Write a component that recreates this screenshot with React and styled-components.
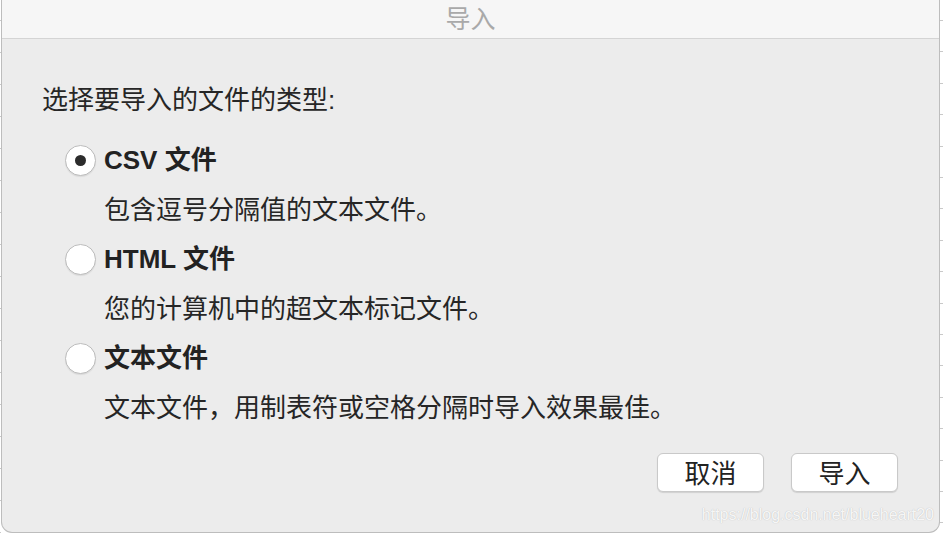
import React, { useState } from 'react'
import styled, { createGlobalStyle } from 'styled-components'

const GlobalStyle = createGlobalStyle`
  body {
    margin: 0;
    background: #fff;
    font-family: "Liberation Sans", "Noto Sans CJK SC", sans-serif;
  }
`

const Backdrop = styled.div`
  width: 943px;
  height: 534px;
  box-sizing: border-box;
  padding-left: 1px;
  background:
    repeating-linear-gradient(to bottom, transparent 0 20px, #c9c9c9 20px 21px, transparent 21px 31.4px) right top / 3px 100% no-repeat,
    repeating-linear-gradient(to bottom, transparent 0 20px, #c9c9c9 20px 21px, transparent 21px 32px) left top / 1px 100% no-repeat,
    #fff;
`

const Dialog = styled.div`
  position: relative;
  width: 939px;
  height: 533px;
  box-sizing: border-box;
  background: #ececec;
  border: 1px solid #bdbdbd;
  border-top: none;
  border-radius: 0 0 11px 11px;
  display: flex;
  flex-direction: column;
  color: #262626;
`

const TitleBar = styled.div`
  height: 38px;
  flex-shrink: 0;
  background: #f6f6f6;
  border-bottom: 1px solid #d4d4d4;
  display: flex;
  align-items: center;
  justify-content: center;
  font-size: 25px;
  color: #a9a9a9;
  line-height: 38px;
`

const Body = styled.div`
  padding: 46px 40px 0 40px;
  display: flex;
  flex-direction: column;
`

const Heading = styled.div`
  font-size: 26px;
  line-height: 30px;
`

const Options = styled.div`
  margin-top: 30px;
  display: flex;
  flex-direction: column;
  gap: 19px;
`

const Option = styled.div`
  display: flex;
  flex-direction: column;
  gap: 20px;
`

const OptionRow = styled.label`
  display: flex;
  align-items: center;
  gap: 8px;
  height: 30px;
  padding-left: 23px;
  cursor: default;
`

const Radio = styled.span`
  width: 31px;
  height: 31px;
  flex-shrink: 0;
  box-sizing: border-box;
  border-radius: 50%;
  background: #fff;
  border: 1px solid #bcbcbc;
  box-shadow: 0 1px 1px rgba(0, 0, 0, 0.08);
  display: flex;
  align-items: center;
  justify-content: center;

  &::after {
    content: "";
    width: 11px;
    height: 11px;
    border-radius: 50%;
    background: #2c2c2c;
    display: ${p => (p.$checked ? 'block' : 'none')};
  }
`

const Label = styled.span`
  font-size: 26px;
  font-weight: 700;
  line-height: 30px;
  color: #222;
`

const Desc = styled.div`
  font-size: 26px;
  line-height: 30px;
  padding-left: 62px;
`

const Footer = styled.div`
  display: flex;
  justify-content: flex-end;
  gap: 27px;
  padding: 30px 41px 0 0;
`

const Button = styled.button`
  width: 107px;
  height: 39px;
  box-sizing: border-box;
  background: #fff;
  border: 1px solid #c9c9c9;
  border-radius: 6px;
  box-shadow: 0 1px 1px rgba(0, 0, 0, 0.12);
  font-family: "Liberation Sans", "Noto Sans CJK SC", sans-serif;
  font-size: 26px;
  line-height: 40px;
  color: #222;
  padding: 0;
`

const Watermark = styled.div`
  position: absolute;
  right: 5px;
  bottom: 7px;
  font-family: "Liberation Sans", sans-serif;
  font-size: 16px;
  line-height: 20px;
  color: rgba(255, 255, 255, 0.9);
  text-shadow: 0 0 1px rgba(0, 0, 0, 0.25);
`

const types = [
  { id: 'csv', label: 'CSV 文件', desc: '包含逗号分隔值的文本文件。' },
  { id: 'html', label: 'HTML 文件', desc: '您的计算机中的超文本标记文件。' },
  { id: 'text', label: '文本文件', desc: '文本文件，用制表符或空格分隔时导入效果最佳。' },
]

export default function App() {
  const [selected, setSelected] = useState('csv')
  return (
    <Backdrop>
      <GlobalStyle />
      <Dialog>
        <TitleBar>导入</TitleBar>
        <Body>
          <Heading>选择要导入的文件的类型:</Heading>
          <Options>
            {types.map(t => (
              <Option key={t.id}>
                <OptionRow onClick={() => setSelected(t.id)}>
                  <Radio $checked={selected === t.id} />
                  <Label>{t.label}</Label>
                </OptionRow>
                <Desc>{t.desc}</Desc>
              </Option>
            ))}
          </Options>
        </Body>
        <Footer>
          <Button>取消</Button>
          <Button>导入</Button>
        </Footer>
        <Watermark>https://blog.csdn.net/blueheart20</Watermark>
      </Dialog>
    </Backdrop>
  )
}
